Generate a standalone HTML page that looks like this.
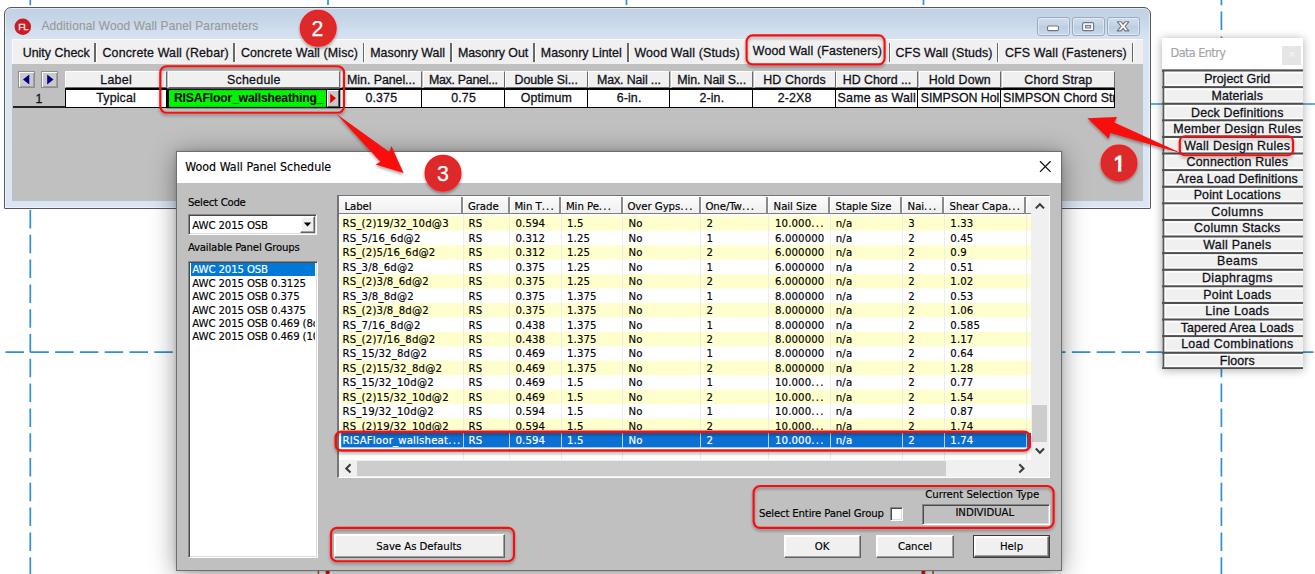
<!DOCTYPE html>
<html><head><meta charset="utf-8">
<title>Wood Wall Panel Schedule</title>
<style>
*{box-sizing:border-box;margin:0;padding:0}
html,body{width:1315px;height:574px;overflow:hidden;background:#fff}
body{position:relative;font-family:"Liberation Sans",sans-serif;font-size:12.4px;color:#000}
.a{position:absolute}
.t{position:absolute;white-space:pre;line-height:1}
.ar{font-family:"Liberation Sans",sans-serif;-webkit-text-stroke:0.28px}
.th{font-family:"DejaVu Sans Condensed","DejaVu Sans","Liberation Sans",sans-serif;-webkit-text-stroke:0.15px}
#mw{position:absolute;left:4px;top:7px;width:1147px;height:202px;border:1px solid #585858;border-radius:7px 7px 1px 1px;
 background:linear-gradient(#c2d2e4 0,#c5d5e7 10px,#d1dfee 24px,#d9e5f2 34px,#dae6f3 100%);box-shadow:inset 0 0 0 1px rgba(255,255,255,.5)}
#client{position:absolute;left:12px;top:39px;width:1131px;height:162px;background:#c0c0c0}
#tabs{position:absolute;left:0;top:0;width:1131px;height:25px;background:#f0f0f0;border-left:1px solid #fbfbfb;border-top:1px solid #fbfbfb}
.sep{position:absolute;top:42.5px;width:1.5px;height:19.5px;background:#686868;box-shadow:1px 0 0 #fff}
.hd{position:absolute;top:71px;height:17px;background:#f0f0f0;border:1px solid;border-color:#fff #6a6a6a #6a6a6a #fff}
.cell{position:absolute;top:88px;height:20px;background:#fff;border-top:2px solid #000;border-bottom:1px solid #000;border-right:1px solid #000}
.nav{position:absolute;top:71px;width:17px;height:17px;background:#cacaca;border:1px solid #8e8e8e;box-shadow:inset 1px 1px 0 #fff,inset -1px -1px 0 #a0a0a0}
.wb{position:absolute;top:17px;width:33px;height:19px;border:1px solid #9aaac0;border-radius:3px;background:linear-gradient(#cfdcec,#c3d3e6 45%,#bccde2 50%,#c9d8ea);box-shadow:inset 0 0 0 1px rgba(255,255,255,.45)}
/* data entry */
#de{position:absolute;left:1162px;top:38px;width:141px;height:331.4px;background:#fff;box-shadow:0 1px 9px rgba(0,0,0,.33);overflow:hidden}
.deb{position:absolute;left:1px;width:148px;background:#f0f0f0;border-top:1px solid #fff;border-left:1px solid #fff;border-bottom:2px solid #555;text-align:center}
/* dialog */
#dlg{position:absolute;left:176px;top:151px;width:886px;height:420px;background:#c0c0c0;border:1px solid #6e6e6e;box-shadow:0 3px 24px rgba(0,0,0,.42),0 0 4px rgba(0,0,0,.15)}
#dlgt{position:absolute;left:0;top:0;width:884px;height:31px;background:#fff}
.sunk{border:1px solid;border-color:#868686 #fff #fff #868686;box-shadow:inset 1px 1px 0 #4a4a4a, inset -1px -1px 0 #dcdcdc}
.btn{position:absolute;background:#f0f0f0;border:1px solid;border-color:#fff #636363 #636363 #fff;box-shadow:inset -1px -1px 0 #a0a0a0,inset 1px 1px 0 #fff}
</style></head>
<body>
<svg class="a" style="left:0;top:0" width="1315" height="574">
 <g stroke="#2f90d2" stroke-width="1.7" fill="none">
  <line x1="30.3" y1="-13.2" x2="30.3" y2="574" stroke-dasharray="18.5 6.3"/>
  <line x1="328" y1="0" x2="328" y2="5"/><line x1="626.5" y1="0" x2="626.5" y2="5"/><line x1="923.5" y1="0" x2="923.5" y2="5"/>
  <line x1="1221.4" y1="-13.2" x2="1221.4" y2="574" stroke-dasharray="18.5 6.3"/>
  <line x1="1151" y1="104" x2="1315" y2="104" stroke-width="1.5" stroke="#3391d4"/>
  <line x1="-19.3" y1="352.1" x2="1315" y2="352.1" stroke-dasharray="18.5 6.3"/>
 </g>
 <rect x="317.6" y="570" width="1.6" height="4" fill="#b5651d"/><rect x="325.7" y="570" width="3.8" height="4" fill="#e01010"/>
 <rect x="921.5" y="570" width="3.8" height="4" fill="#e01010"/><rect x="932.3" y="570" width="1.6" height="4" fill="#b5651d"/>
</svg>
<div id="mw"></div>
<svg class="a" style="left:13px;top:17px" width="20" height="20" viewBox="0 0 20 20"><circle cx="9.8" cy="9.75" r="8.25" fill="#c81c22"/>
<text x="9.9" y="13.1" style="font-family:'Liberation Sans',sans-serif;font-size:9.5px" fill="#f8e4e4" stroke="#f8e4e4" stroke-width="0.3" text-anchor="middle" letter-spacing="-0.9">FL</text></svg>
<div class="t ar" style="left:41.40px;top:21.00px;font-size:11.9px;color:#999;letter-spacing:0.167px;-webkit-text-stroke:0.15px;">Additional Wood Wall Panel Parameters</div>
<div class="wb" style="left:1037px"></div>
<div class="wb" style="left:1072px"></div>
<div class="wb" style="left:1107px"></div>
<svg class="a" style="left:1037px;top:17px" width="104" height="19">
 <rect x="10.5" y="9" width="11" height="4.6" rx="1.3" fill="#fff" stroke="#6f7480" stroke-width="1.1"/>
 <rect x="45.6" y="5.6" width="11" height="8" rx="1.3" fill="#fff" stroke="#6f7480" stroke-width="1.1"/>
 <rect x="48.6" y="8.4" width="5" height="2.6" fill="#c3d3e6" stroke="#6f7480" stroke-width="1"/>
 <path d="M80.4 4.8 L84.2 4.8 L86.1 7.3 L88 4.8 L91.8 4.8 L88.1 9.3 L91.9 13.9 L88 13.9 L86.1 11.3 L84.2 13.9 L80.3 13.9 L84.1 9.3 Z" fill="#fff" stroke="#6f7480" stroke-width="1.1" stroke-linejoin="round"/>
</svg>
<div id="client"><div id="tabs"></div></div>
<div class="t ar" style="left:22.70px;top:47.00px;font-size:12.4px;color:#101018;letter-spacing:0.026px;">Unity Check</div>
<div class="t ar" style="left:102.50px;top:47.00px;font-size:12.4px;color:#101018;letter-spacing:0.166px;">Concrete Wall (Rebar)</div>
<div class="t ar" style="left:240.90px;top:47.00px;font-size:12.4px;color:#101018;letter-spacing:0.132px;">Concrete Wall (Misc)</div>
<div class="t ar" style="left:370.30px;top:47.00px;font-size:12.4px;color:#101018;letter-spacing:0.005px;">Masonry Wall</div>
<div class="t ar" style="left:458.00px;top:47.00px;font-size:12.4px;color:#101018;letter-spacing:-0.078px;">Masonry Out</div>
<div class="t ar" style="left:540.80px;top:47.00px;font-size:12.4px;color:#101018;letter-spacing:0.028px;">Masonry Lintel</div>
<div class="t ar" style="left:634.40px;top:47.00px;font-size:12.4px;color:#101018;letter-spacing:0.170px;">Wood Wall (Studs)</div>
<div class="t ar" style="left:752.80px;top:45.00px;font-size:12.4px;color:#101018;letter-spacing:0.155px;">Wood Wall (Fasteners)</div>
<div class="t ar" style="left:895.40px;top:47.00px;font-size:12.4px;color:#101018;letter-spacing:0.120px;">CFS Wall (Studs)</div>
<div class="t ar" style="left:1005.00px;top:47.00px;font-size:12.4px;color:#101018;letter-spacing:0.161px;">CFS Wall (Fasteners)</div>
<div class="sep" style="left:94.2px"></div>
<div class="sep" style="left:233.2px"></div>
<div class="sep" style="left:362.6px"></div>
<div class="sep" style="left:450.3px"></div>
<div class="sep" style="left:533px"></div>
<div class="sep" style="left:627.2px"></div>
<div class="sep" style="left:888.8px"></div>
<div class="sep" style="left:996.8px"></div>
<div class="sep" style="left:1131.5px"></div>
<div class="a" style="left:746px;top:36.5px;width:139px;height:27.5px;background:#f0f0f0;border-left:1px solid #fbfbfb;border-top:1px solid #fbfbfb"></div>
<div class="t ar" style="left:752.80px;top:45.00px;font-size:12.4px;color:#101018;letter-spacing:0.155px;">Wood Wall (Fasteners)</div>
<div class="nav" style="left:18px"></div><div class="nav" style="left:41px"></div>
<svg class="a" style="left:18px;top:71px" width="42" height="18"><path d="M11.3 3.6V13.4L5 8.5Z" fill="#00008b"/><path d="M29.2 3.6V13.4L35.5 8.5Z" fill="#00008b"/></svg>
<div class="a" style="left:13px;top:89px;width:52px;height:19px;background:#c0c0c0;border-bottom:2px solid #222"></div>
<div class="t ar" style="left:35.55px;top:93.00px;font-size:12.4px;color:#101018;">1</div>
<div class="hd" style="left:65px;width:102px"></div>
<div class="t ar" style="left:100.30px;top:74.00px;font-size:12.4px;color:#101018;letter-spacing:0.265px;">Label</div>
<div class="cell" style="left:64.5px;width:102.5px;border-left:1px solid #000"></div>
<div class="t ar" style="left:96.25px;top:92.00px;font-size:12.4px;color:#101018;letter-spacing:0.150px;">Typical</div>
<div class="hd" style="left:167.5px;width:172.5px"></div>
<div class="t ar" style="left:227.00px;top:74.00px;font-size:12.4px;color:#101018;letter-spacing:0.256px;">Schedule</div>
<div class="hd" style="left:340.5px;width:81.5px"></div>
<div class="t ar" style="left:347.10px;top:74.00px;font-size:12.4px;color:#101018;letter-spacing:-0.052px;">Min. Panel...</div>
<div class="cell" style="left:340.0px;width:82.0px;"></div>
<div class="t ar" style="left:365.43px;top:92.00px;font-size:12.4px;color:#101018;letter-spacing:0.150px;">0.375</div>
<div class="hd" style="left:422.5px;width:82.0px"></div>
<div class="t ar" style="left:428.90px;top:74.00px;font-size:12.4px;color:#101018;letter-spacing:-0.264px;">Max. Panel...</div>
<div class="cell" style="left:422.0px;width:82.5px;"></div>
<div class="t ar" style="left:451.21px;top:92.00px;font-size:12.4px;color:#101018;letter-spacing:0.150px;">0.75</div>
<div class="hd" style="left:505px;width:82.5px"></div>
<div class="t ar" style="left:514.50px;top:74.00px;font-size:12.4px;color:#101018;letter-spacing:-0.055px;">Double Si...</div>
<div class="cell" style="left:504.5px;width:83.0px;"></div>
<div class="t ar" style="left:520.65px;top:92.00px;font-size:12.4px;color:#101018;letter-spacing:0.150px;">Optimum</div>
<div class="hd" style="left:588px;width:82px"></div>
<div class="t ar" style="left:597.00px;top:74.00px;font-size:12.4px;color:#101018;letter-spacing:-0.121px;">Max. Nail ...</div>
<div class="cell" style="left:587.5px;width:82.5px;"></div>
<div class="t ar" style="left:616.64px;top:92.00px;font-size:12.4px;color:#101018;letter-spacing:0.150px;">6-in.</div>
<div class="hd" style="left:670.5px;width:82.5px"></div>
<div class="t ar" style="left:677.35px;top:74.00px;font-size:12.4px;color:#101018;letter-spacing:-0.114px;">Min. Nail S...</div>
<div class="cell" style="left:670.0px;width:83.0px;"></div>
<div class="t ar" style="left:699.39px;top:92.00px;font-size:12.4px;color:#101018;letter-spacing:0.150px;">2-in.</div>
<div class="hd" style="left:753.5px;width:82.0px"></div>
<div class="t ar" style="left:763.15px;top:74.00px;font-size:12.4px;color:#101018;letter-spacing:0.171px;">HD Chords</div>
<div class="cell" style="left:753.0px;width:82.5px;"></div>
<div class="t ar" style="left:777.66px;top:92.00px;font-size:12.4px;color:#101018;letter-spacing:0.150px;">2-2X8</div>
<div class="hd" style="left:836px;width:82px"></div>
<div class="t ar" style="left:842.85px;top:74.00px;font-size:12.4px;color:#101018;letter-spacing:-0.055px;">HD Chord ...</div>
<div class="cell" style="left:835.5px;width:82.5px;"></div>
<div class="a" style="left:837px;top:90px;width:80px;height:17px;overflow:hidden">
<div class="t ar" style="left:0.60px;top:2.00px;font-size:12.4px;color:#101018;letter-spacing:0.200px;">Same as Wall</div>
</div>
<div class="hd" style="left:918.5px;width:82.5px"></div>
<div class="t ar" style="left:928.75px;top:74.00px;font-size:12.4px;color:#101018;letter-spacing:0.169px;">Hold Down</div>
<div class="cell" style="left:918.0px;width:83.0px;"></div>
<div class="a" style="left:919.5px;top:90px;width:80.5px;height:17px;overflow:hidden">
<div class="t ar" style="left:1.20px;top:2.00px;font-size:12.4px;color:#101018;letter-spacing:-0.050px;">SIMPSON Hol</div>
</div>
<div class="hd" style="left:1001.5px;width:113.5px"></div>
<div class="t ar" style="left:1024.35px;top:74.00px;font-size:12.4px;color:#101018;letter-spacing:0.094px;">Chord Strap</div>
<div class="cell" style="left:1001.0px;width:114.0px;"></div>
<div class="a" style="left:1002.5px;top:90px;width:111.5px;height:17px;overflow:hidden">
<div class="t ar" style="left:0.40px;top:2.00px;font-size:12.4px;color:#101018;">SIMPSON Chord Str</div>
</div>
<svg class="a" style="left:165px;top:88px" width="177" height="21"><rect x="1.7" y="0.4" width="173.6" height="19.9" fill="#0a0a0a"/><rect x="4" y="2.1" width="157" height="16.8" fill="#00f600"/></svg>
<div class="a" style="left:327px;top:90px;width:11.5px;height:17px;background:#c8c8c8;border:1px solid;border-color:#fff #555 #555 #fff"></div>
<svg class="a" style="left:327px;top:90px" width="12" height="17"><path d="M3.2 3.4V13.2L9 8.3Z" fill="#e00000"/></svg>
<div class="t ar" style="left:174.00px;top:92.00px;font-size:12.2px;color:#000;letter-spacing:-0.178px;font-weight:bold;-webkit-text-stroke:0;">RISAFloor_wallsheathing_</div>
<div id="de">
<div class="a" style="left:120px;top:8px;width:19px;height:19px;background:#e5e5e5"></div>
<svg class="a" style="left:0;top:-1px" width="141" height="333"><rect x="0" y="32.2" width="141" height="299.8" fill="#f0f0f0"/><rect x="2.2" y="35" width="1.9" height="296" fill="#fdfdfd"/><rect x="0" y="32.50" width="141" height="2.2" fill="#4e4e4e"/><rect x="2" y="34.70" width="139" height="1.8" fill="#fdfdfd"/><rect x="2" y="47.40" width="139" height="1.7" fill="#fdfdfd"/><rect x="0" y="49.10" width="141" height="2.2" fill="#4e4e4e"/><rect x="2" y="51.30" width="139" height="1.8" fill="#fdfdfd"/><rect x="2" y="64.00" width="139" height="1.7" fill="#fdfdfd"/><rect x="0" y="65.70" width="141" height="2.2" fill="#4e4e4e"/><rect x="2" y="67.90" width="139" height="1.8" fill="#fdfdfd"/><rect x="2" y="80.60" width="139" height="1.7" fill="#fdfdfd"/><rect x="0" y="82.30" width="141" height="2.2" fill="#4e4e4e"/><rect x="2" y="84.50" width="139" height="1.8" fill="#fdfdfd"/><rect x="2" y="97.20" width="139" height="1.7" fill="#fdfdfd"/><rect x="0" y="98.90" width="141" height="2.2" fill="#4e4e4e"/><rect x="2" y="101.10" width="139" height="1.8" fill="#fdfdfd"/><rect x="2" y="113.80" width="139" height="1.7" fill="#fdfdfd"/><rect x="0" y="115.50" width="141" height="2.2" fill="#4e4e4e"/><rect x="2" y="117.70" width="139" height="1.8" fill="#fdfdfd"/><rect x="2" y="130.40" width="139" height="1.7" fill="#fdfdfd"/><rect x="0" y="132.10" width="141" height="2.2" fill="#4e4e4e"/><rect x="2" y="134.30" width="139" height="1.8" fill="#fdfdfd"/><rect x="2" y="147.00" width="139" height="1.7" fill="#fdfdfd"/><rect x="0" y="148.70" width="141" height="2.2" fill="#4e4e4e"/><rect x="2" y="150.90" width="139" height="1.8" fill="#fdfdfd"/><rect x="2" y="163.60" width="139" height="1.7" fill="#fdfdfd"/><rect x="0" y="165.30" width="141" height="2.2" fill="#4e4e4e"/><rect x="2" y="167.50" width="139" height="1.8" fill="#fdfdfd"/><rect x="2" y="180.20" width="139" height="1.7" fill="#fdfdfd"/><rect x="0" y="181.90" width="141" height="2.2" fill="#4e4e4e"/><rect x="2" y="184.10" width="139" height="1.8" fill="#fdfdfd"/><rect x="2" y="196.80" width="139" height="1.7" fill="#fdfdfd"/><rect x="0" y="198.50" width="141" height="2.2" fill="#4e4e4e"/><rect x="2" y="200.70" width="139" height="1.8" fill="#fdfdfd"/><rect x="2" y="213.40" width="139" height="1.7" fill="#fdfdfd"/><rect x="0" y="215.10" width="141" height="2.2" fill="#4e4e4e"/><rect x="2" y="217.30" width="139" height="1.8" fill="#fdfdfd"/><rect x="2" y="230.00" width="139" height="1.7" fill="#fdfdfd"/><rect x="0" y="231.70" width="141" height="2.2" fill="#4e4e4e"/><rect x="2" y="233.90" width="139" height="1.8" fill="#fdfdfd"/><rect x="2" y="246.60" width="139" height="1.7" fill="#fdfdfd"/><rect x="0" y="248.30" width="141" height="2.2" fill="#4e4e4e"/><rect x="2" y="250.50" width="139" height="1.8" fill="#fdfdfd"/><rect x="2" y="263.20" width="139" height="1.7" fill="#fdfdfd"/><rect x="0" y="264.90" width="141" height="2.2" fill="#4e4e4e"/><rect x="2" y="267.10" width="139" height="1.8" fill="#fdfdfd"/><rect x="2" y="279.80" width="139" height="1.7" fill="#fdfdfd"/><rect x="0" y="281.50" width="141" height="2.2" fill="#4e4e4e"/><rect x="2" y="283.70" width="139" height="1.8" fill="#fdfdfd"/><rect x="2" y="296.40" width="139" height="1.7" fill="#fdfdfd"/><rect x="0" y="298.10" width="141" height="2.2" fill="#4e4e4e"/><rect x="2" y="300.30" width="139" height="1.8" fill="#fdfdfd"/><rect x="2" y="313.00" width="139" height="1.7" fill="#fdfdfd"/><rect x="0" y="314.70" width="141" height="2.2" fill="#4e4e4e"/><rect x="2" y="316.90" width="139" height="1.8" fill="#fdfdfd"/><rect x="2" y="328.50" width="139" height="1.7" fill="#fdfdfd"/><rect x="0" y="330.20" width="141" height="2.2" fill="#4e4e4e"/><rect x="0.5" y="33" width="1.8" height="299" fill="#585858"/><rect x="0" y="32.2" width="141" height="0.8" fill="#8a8a8a"/></svg>
</div>
<div class="t th" style="left:1170.50px;top:47.00px;font-size:12.6px;color:#a4a4a4;letter-spacing:-0.591px;">Data Entry</div>
<div class="t ar" style="left:1288.49px;top:49.00px;font-size:11px;color:#f4f4f4;">×</div>
<div class="t ar" style="left:1204.15px;top:73.00px;font-size:12.4px;color:#101018;letter-spacing:0.058px;">Project Grid</div>
<div class="t ar" style="left:1211.50px;top:90.00px;font-size:12.4px;color:#101018;letter-spacing:0.137px;">Materials</div>
<div class="t ar" style="left:1191.00px;top:107.00px;font-size:12.4px;color:#101018;letter-spacing:0.187px;">Deck Definitions</div>
<div class="t ar" style="left:1173.30px;top:123.00px;font-size:12.4px;color:#101018;letter-spacing:0.285px;">Member Design Rules</div>
<div class="t ar" style="left:1184.30px;top:140.00px;font-size:12.4px;color:#101018;letter-spacing:0.310px;">Wall Design Rules</div>
<div class="t ar" style="left:1186.50px;top:156.00px;font-size:12.4px;color:#101018;letter-spacing:0.235px;">Connection Rules</div>
<div class="t ar" style="left:1176.60px;top:173.00px;font-size:12.4px;color:#101018;letter-spacing:0.132px;">Area Load Definitions</div>
<div class="t ar" style="left:1193.70px;top:189.00px;font-size:12.4px;color:#101018;letter-spacing:0.158px;">Point Locations</div>
<div class="t ar" style="left:1211.20px;top:206.00px;font-size:12.4px;color:#101018;letter-spacing:0.512px;">Columns</div>
<div class="t ar" style="left:1194.10px;top:222.00px;font-size:12.4px;color:#101018;letter-spacing:0.235px;">Column Stacks</div>
<div class="t ar" style="left:1203.25px;top:239.00px;font-size:12.4px;color:#101018;letter-spacing:0.289px;">Wall Panels</div>
<div class="t ar" style="left:1216.95px;top:255.00px;font-size:12.4px;color:#101018;letter-spacing:0.477px;">Beams</div>
<div class="t ar" style="left:1201.90px;top:272.00px;font-size:12.4px;color:#101018;letter-spacing:0.417px;">Diaphragms</div>
<div class="t ar" style="left:1203.25px;top:289.00px;font-size:12.4px;color:#101018;letter-spacing:0.241px;">Point Loads</div>
<div class="t ar" style="left:1205.30px;top:305.00px;font-size:12.4px;color:#101018;letter-spacing:0.347px;">Line Loads</div>
<div class="t ar" style="left:1180.65px;top:322.00px;font-size:12.4px;color:#101018;letter-spacing:0.124px;">Tapered Area Loads</div>
<div class="t ar" style="left:1181.15px;top:338.00px;font-size:12.4px;color:#101018;letter-spacing:0.328px;">Load Combinations</div>
<div class="t ar" style="left:1219.80px;top:355.00px;font-size:12.4px;color:#101018;letter-spacing:0.070px;">Floors</div>
<div id="dlg"><div id="dlgt"></div></div>
<div class="t th" style="left:185.20px;top:161.00px;font-size:12.3px;color:#000;letter-spacing:0.040px;">Wood Wall Panel Schedule</div>
<svg class="a" style="left:1038px;top:159px" width="15" height="15"><path d="M2 2.3L12.6 12.9M12.6 2.3L2 12.9" stroke="#111" stroke-width="1.25" fill="none"/></svg>
<div class="t th" style="left:187.90px;top:197.00px;font-size:11.3px;color:#000;letter-spacing:-0.263px;">Select Code</div>
<div class="a sunk" style="left:188px;top:213.5px;width:129px;height:21px;background:#fff"></div>
<div class="btn" style="left:299.5px;top:215.5px;width:15.5px;height:17px"></div>
<svg class="a" style="left:299.5px;top:215.5px" width="16" height="17"><path d="M3.8 6.6H11.2L7.5 10.6Z" fill="#000"/></svg>
<div class="t th" style="left:192.30px;top:220.00px;font-size:11.3px;color:#000;letter-spacing:-0.131px;">AWC 2015 OSB</div>
<div class="t th" style="left:187.90px;top:242.00px;font-size:11.3px;color:#000;letter-spacing:-0.191px;">Available Panel Groups</div>
<div class="a sunk" style="left:188px;top:260.5px;width:129.5px;height:297.5px;background:#fff"></div>
<div class="a" style="left:190.5px;top:262.7px;width:124.5px;height:13.4px;background:#0078d7"></div>
<div class="a" style="left:190px;top:262px;width:125px;height:90px;overflow:hidden">
<div class="t th" style="left:2.30px;top:2.00px;font-size:11.3px;color:#fff;letter-spacing:-0.130px;">AWC 2015 OSB</div>
<div class="t th" style="left:2.30px;top:16.00px;font-size:11.3px;color:#000;letter-spacing:-0.130px;">AWC 2015 OSB 0.3125</div>
<div class="t th" style="left:2.30px;top:29.00px;font-size:11.3px;color:#000;letter-spacing:-0.130px;">AWC 2015 OSB 0.375</div>
<div class="t th" style="left:2.30px;top:43.00px;font-size:11.3px;color:#000;letter-spacing:-0.130px;">AWC 2015 OSB 0.4375</div>
<div class="t th" style="left:2.30px;top:56.00px;font-size:11.3px;color:#000;letter-spacing:-0.130px;">AWC 2015 OSB 0.469 (8d</div>
<div class="t th" style="left:2.30px;top:69.00px;font-size:11.3px;color:#000;letter-spacing:-0.130px;">AWC 2015 OSB 0.469 (10</div>
</div>
<div class="a" style="left:337px;top:195px;width:713px;height:282.5px;background:#fff;border:1px solid;border-color:#757575 #fff #fff #757575;border-left-width:2px"></div>
<svg class="a" style="left:339px;top:213px" width="693" height="248"><rect x="2" y="3.20" width="690" height="14.45" fill="#ffffcd"/><rect x="2" y="32.10" width="690" height="14.45" fill="#ffffcd"/><rect x="2" y="61.00" width="690" height="14.45" fill="#ffffcd"/><rect x="2" y="89.90" width="690" height="14.45" fill="#ffffcd"/><rect x="2" y="118.80" width="690" height="14.45" fill="#ffffcd"/><rect x="2" y="147.70" width="690" height="14.45" fill="#ffffcd"/><rect x="2" y="176.60" width="690" height="14.45" fill="#ffffcd"/><rect x="2" y="205.50" width="690" height="14.45" fill="#ffffcd"/><rect x="2.2" y="219.95" width="689.8" height="14.45" fill="#0a70d4"/></svg>
<div class="a" style="left:462.5px;top:213.5px;width:1px;height:246.5px;background:rgba(232,232,232,.8)"></div>
<div class="a" style="left:509.0px;top:213.5px;width:1px;height:246.5px;background:rgba(232,232,232,.8)"></div>
<div class="a" style="left:560.5px;top:213.5px;width:1px;height:246.5px;background:rgba(232,232,232,.8)"></div>
<div class="a" style="left:622.0px;top:213.5px;width:1px;height:246.5px;background:rgba(232,232,232,.8)"></div>
<div class="a" style="left:700.0px;top:213.5px;width:1px;height:246.5px;background:rgba(232,232,232,.8)"></div>
<div class="a" style="left:767.5px;top:213.5px;width:1px;height:246.5px;background:rgba(232,232,232,.8)"></div>
<div class="a" style="left:829.5px;top:213.5px;width:1px;height:246.5px;background:rgba(232,232,232,.8)"></div>
<div class="a" style="left:901.5px;top:213.5px;width:1px;height:246.5px;background:rgba(232,232,232,.8)"></div>
<div class="a" style="left:943.5px;top:213.5px;width:1px;height:246.5px;background:rgba(232,232,232,.8)"></div>
<div class="a" style="left:1025.8px;top:213.5px;width:1px;height:246.5px;background:rgba(232,232,232,.8)"></div>
<div class="a" style="left:339px;top:196.5px;width:692px;height:17px;background:linear-gradient(#fbfbfb,#efefef);border-bottom:1px solid #7e7e7e"></div>
<div class="a" style="left:461px;top:197px;width:2px;height:15.5px;background:#8a8a8a;box-shadow:1px 0 0 #fff"></div>
<div class="t th" style="left:344.40px;top:201.00px;font-size:11.3px;color:#000;letter-spacing:-0.050px;">Label</div>
<div class="a" style="left:507.5px;top:197px;width:2px;height:15.5px;background:#8a8a8a;box-shadow:1px 0 0 #fff"></div>
<div class="t th" style="left:467.90px;top:201.00px;font-size:11.3px;color:#000;letter-spacing:-0.050px;">Grade</div>
<div class="a" style="left:559px;top:197px;width:2px;height:15.5px;background:#8a8a8a;box-shadow:1px 0 0 #fff"></div>
<div class="t th" style="left:514.40px;top:201.00px;font-size:11.3px;color:#000;letter-spacing:-0.050px;">Min T<span style="letter-spacing:1.25px">...</span></div>
<div class="a" style="left:620.5px;top:197px;width:2px;height:15.5px;background:#8a8a8a;box-shadow:1px 0 0 #fff"></div>
<div class="t th" style="left:565.90px;top:201.00px;font-size:11.3px;color:#000;letter-spacing:-0.050px;">Min Pe<span style="letter-spacing:1.25px">...</span></div>
<div class="a" style="left:698.5px;top:197px;width:2px;height:15.5px;background:#8a8a8a;box-shadow:1px 0 0 #fff"></div>
<div class="t th" style="left:627.40px;top:201.00px;font-size:11.3px;color:#000;letter-spacing:-0.050px;">Over Gyps<span style="letter-spacing:1.25px">...</span></div>
<div class="a" style="left:766px;top:197px;width:2px;height:15.5px;background:#8a8a8a;box-shadow:1px 0 0 #fff"></div>
<div class="t th" style="left:705.40px;top:201.00px;font-size:11.3px;color:#000;letter-spacing:-0.050px;">One/Tw<span style="letter-spacing:1.25px">...</span></div>
<div class="a" style="left:828px;top:197px;width:2px;height:15.5px;background:#8a8a8a;box-shadow:1px 0 0 #fff"></div>
<div class="t th" style="left:773.60px;top:201.00px;font-size:11.3px;color:#000;letter-spacing:-0.050px;">Nail Size</div>
<div class="a" style="left:900px;top:197px;width:2px;height:15.5px;background:#8a8a8a;box-shadow:1px 0 0 #fff"></div>
<div class="t th" style="left:835.60px;top:201.00px;font-size:11.3px;color:#000;letter-spacing:-0.050px;">Staple Size</div>
<div class="a" style="left:942px;top:197px;width:2px;height:15.5px;background:#8a8a8a;box-shadow:1px 0 0 #fff"></div>
<div class="t th" style="left:907.60px;top:201.00px;font-size:11.3px;color:#000;letter-spacing:-0.050px;">Nai<span style="letter-spacing:1.25px">...</span></div>
<div class="a" style="left:1024.3px;top:197px;width:2px;height:15.5px;background:#8a8a8a;box-shadow:1px 0 0 #fff"></div>
<div class="t th" style="left:949.60px;top:201.00px;font-size:11.3px;color:#000;letter-spacing:-0.050px;">Shear Capa<span style="letter-spacing:1.25px">...</span></div>
<div class="t th" style="left:342.50px;top:218.00px;font-size:11.3px;color:#000;letter-spacing:0.170px;">RS_(2)19/32_10d@3</div>
<div class="t th" style="left:468.50px;top:218.00px;font-size:11.3px;color:#000;letter-spacing:0.120px;">RS</div>
<div class="t th" style="left:515.50px;top:218.00px;font-size:11.3px;color:#000;letter-spacing:0.120px;">0.594</div>
<div class="t th" style="left:567.00px;top:218.00px;font-size:11.3px;color:#000;letter-spacing:0.120px;">1.5</div>
<div class="t th" style="left:628.50px;top:218.00px;font-size:11.3px;color:#000;letter-spacing:0.120px;">No</div>
<div class="t th" style="left:706.50px;top:218.00px;font-size:11.3px;color:#000;letter-spacing:0.120px;">2</div>
<div class="t th" style="left:775.00px;top:218.00px;font-size:11.3px;color:#000;letter-spacing:0.120px;">10.000<span style="letter-spacing:1.25px">...</span></div>
<div class="t th" style="left:835.80px;top:218.00px;font-size:11.3px;color:#000;letter-spacing:0.120px;">n/a</div>
<div class="t th" style="left:908.20px;top:218.00px;font-size:11.3px;color:#000;letter-spacing:0.120px;">3</div>
<div class="t th" style="left:950.30px;top:218.00px;font-size:11.3px;color:#000;letter-spacing:0.120px;">1.33</div>
<div class="t th" style="left:342.50px;top:233.00px;font-size:11.3px;color:#000;letter-spacing:0.170px;">RS_5/16_6d@2</div>
<div class="t th" style="left:468.50px;top:233.00px;font-size:11.3px;color:#000;letter-spacing:0.120px;">RS</div>
<div class="t th" style="left:515.50px;top:233.00px;font-size:11.3px;color:#000;letter-spacing:0.120px;">0.312</div>
<div class="t th" style="left:567.00px;top:233.00px;font-size:11.3px;color:#000;letter-spacing:0.120px;">1.25</div>
<div class="t th" style="left:628.50px;top:233.00px;font-size:11.3px;color:#000;letter-spacing:0.120px;">No</div>
<div class="t th" style="left:706.50px;top:233.00px;font-size:11.3px;color:#000;letter-spacing:0.120px;">1</div>
<div class="t th" style="left:775.00px;top:233.00px;font-size:11.3px;color:#000;letter-spacing:0.120px;">6.000000</div>
<div class="t th" style="left:835.80px;top:233.00px;font-size:11.3px;color:#000;letter-spacing:0.120px;">n/a</div>
<div class="t th" style="left:908.20px;top:233.00px;font-size:11.3px;color:#000;letter-spacing:0.120px;">2</div>
<div class="t th" style="left:950.30px;top:233.00px;font-size:11.3px;color:#000;letter-spacing:0.120px;">0.45</div>
<div class="t th" style="left:342.50px;top:247.00px;font-size:11.3px;color:#000;letter-spacing:0.170px;">RS_(2)5/16_6d@2</div>
<div class="t th" style="left:468.50px;top:247.00px;font-size:11.3px;color:#000;letter-spacing:0.120px;">RS</div>
<div class="t th" style="left:515.50px;top:247.00px;font-size:11.3px;color:#000;letter-spacing:0.120px;">0.312</div>
<div class="t th" style="left:567.00px;top:247.00px;font-size:11.3px;color:#000;letter-spacing:0.120px;">1.25</div>
<div class="t th" style="left:628.50px;top:247.00px;font-size:11.3px;color:#000;letter-spacing:0.120px;">No</div>
<div class="t th" style="left:706.50px;top:247.00px;font-size:11.3px;color:#000;letter-spacing:0.120px;">2</div>
<div class="t th" style="left:775.00px;top:247.00px;font-size:11.3px;color:#000;letter-spacing:0.120px;">6.000000</div>
<div class="t th" style="left:835.80px;top:247.00px;font-size:11.3px;color:#000;letter-spacing:0.120px;">n/a</div>
<div class="t th" style="left:908.20px;top:247.00px;font-size:11.3px;color:#000;letter-spacing:0.120px;">2</div>
<div class="t th" style="left:950.30px;top:247.00px;font-size:11.3px;color:#000;letter-spacing:0.120px;">0.9</div>
<div class="t th" style="left:342.50px;top:262.00px;font-size:11.3px;color:#000;letter-spacing:0.170px;">RS_3/8_6d@2</div>
<div class="t th" style="left:468.50px;top:262.00px;font-size:11.3px;color:#000;letter-spacing:0.120px;">RS</div>
<div class="t th" style="left:515.50px;top:262.00px;font-size:11.3px;color:#000;letter-spacing:0.120px;">0.375</div>
<div class="t th" style="left:567.00px;top:262.00px;font-size:11.3px;color:#000;letter-spacing:0.120px;">1.25</div>
<div class="t th" style="left:628.50px;top:262.00px;font-size:11.3px;color:#000;letter-spacing:0.120px;">No</div>
<div class="t th" style="left:706.50px;top:262.00px;font-size:11.3px;color:#000;letter-spacing:0.120px;">1</div>
<div class="t th" style="left:775.00px;top:262.00px;font-size:11.3px;color:#000;letter-spacing:0.120px;">6.000000</div>
<div class="t th" style="left:835.80px;top:262.00px;font-size:11.3px;color:#000;letter-spacing:0.120px;">n/a</div>
<div class="t th" style="left:908.20px;top:262.00px;font-size:11.3px;color:#000;letter-spacing:0.120px;">2</div>
<div class="t th" style="left:950.30px;top:262.00px;font-size:11.3px;color:#000;letter-spacing:0.120px;">0.51</div>
<div class="t th" style="left:342.50px;top:276.00px;font-size:11.3px;color:#000;letter-spacing:0.170px;">RS_(2)3/8_6d@2</div>
<div class="t th" style="left:468.50px;top:276.00px;font-size:11.3px;color:#000;letter-spacing:0.120px;">RS</div>
<div class="t th" style="left:515.50px;top:276.00px;font-size:11.3px;color:#000;letter-spacing:0.120px;">0.375</div>
<div class="t th" style="left:567.00px;top:276.00px;font-size:11.3px;color:#000;letter-spacing:0.120px;">1.25</div>
<div class="t th" style="left:628.50px;top:276.00px;font-size:11.3px;color:#000;letter-spacing:0.120px;">No</div>
<div class="t th" style="left:706.50px;top:276.00px;font-size:11.3px;color:#000;letter-spacing:0.120px;">2</div>
<div class="t th" style="left:775.00px;top:276.00px;font-size:11.3px;color:#000;letter-spacing:0.120px;">6.000000</div>
<div class="t th" style="left:835.80px;top:276.00px;font-size:11.3px;color:#000;letter-spacing:0.120px;">n/a</div>
<div class="t th" style="left:908.20px;top:276.00px;font-size:11.3px;color:#000;letter-spacing:0.120px;">2</div>
<div class="t th" style="left:950.30px;top:276.00px;font-size:11.3px;color:#000;letter-spacing:0.120px;">1.02</div>
<div class="t th" style="left:342.50px;top:291.00px;font-size:11.3px;color:#000;letter-spacing:0.170px;">RS_3/8_8d@2</div>
<div class="t th" style="left:468.50px;top:291.00px;font-size:11.3px;color:#000;letter-spacing:0.120px;">RS</div>
<div class="t th" style="left:515.50px;top:291.00px;font-size:11.3px;color:#000;letter-spacing:0.120px;">0.375</div>
<div class="t th" style="left:567.00px;top:291.00px;font-size:11.3px;color:#000;letter-spacing:0.120px;">1.375</div>
<div class="t th" style="left:628.50px;top:291.00px;font-size:11.3px;color:#000;letter-spacing:0.120px;">No</div>
<div class="t th" style="left:706.50px;top:291.00px;font-size:11.3px;color:#000;letter-spacing:0.120px;">1</div>
<div class="t th" style="left:775.00px;top:291.00px;font-size:11.3px;color:#000;letter-spacing:0.120px;">8.000000</div>
<div class="t th" style="left:835.80px;top:291.00px;font-size:11.3px;color:#000;letter-spacing:0.120px;">n/a</div>
<div class="t th" style="left:908.20px;top:291.00px;font-size:11.3px;color:#000;letter-spacing:0.120px;">2</div>
<div class="t th" style="left:950.30px;top:291.00px;font-size:11.3px;color:#000;letter-spacing:0.120px;">0.53</div>
<div class="t th" style="left:342.50px;top:305.00px;font-size:11.3px;color:#000;letter-spacing:0.170px;">RS_(2)3/8_8d@2</div>
<div class="t th" style="left:468.50px;top:305.00px;font-size:11.3px;color:#000;letter-spacing:0.120px;">RS</div>
<div class="t th" style="left:515.50px;top:305.00px;font-size:11.3px;color:#000;letter-spacing:0.120px;">0.375</div>
<div class="t th" style="left:567.00px;top:305.00px;font-size:11.3px;color:#000;letter-spacing:0.120px;">1.375</div>
<div class="t th" style="left:628.50px;top:305.00px;font-size:11.3px;color:#000;letter-spacing:0.120px;">No</div>
<div class="t th" style="left:706.50px;top:305.00px;font-size:11.3px;color:#000;letter-spacing:0.120px;">2</div>
<div class="t th" style="left:775.00px;top:305.00px;font-size:11.3px;color:#000;letter-spacing:0.120px;">8.000000</div>
<div class="t th" style="left:835.80px;top:305.00px;font-size:11.3px;color:#000;letter-spacing:0.120px;">n/a</div>
<div class="t th" style="left:908.20px;top:305.00px;font-size:11.3px;color:#000;letter-spacing:0.120px;">2</div>
<div class="t th" style="left:950.30px;top:305.00px;font-size:11.3px;color:#000;letter-spacing:0.120px;">1.06</div>
<div class="t th" style="left:342.50px;top:320.00px;font-size:11.3px;color:#000;letter-spacing:0.170px;">RS_7/16_8d@2</div>
<div class="t th" style="left:468.50px;top:320.00px;font-size:11.3px;color:#000;letter-spacing:0.120px;">RS</div>
<div class="t th" style="left:515.50px;top:320.00px;font-size:11.3px;color:#000;letter-spacing:0.120px;">0.438</div>
<div class="t th" style="left:567.00px;top:320.00px;font-size:11.3px;color:#000;letter-spacing:0.120px;">1.375</div>
<div class="t th" style="left:628.50px;top:320.00px;font-size:11.3px;color:#000;letter-spacing:0.120px;">No</div>
<div class="t th" style="left:706.50px;top:320.00px;font-size:11.3px;color:#000;letter-spacing:0.120px;">1</div>
<div class="t th" style="left:775.00px;top:320.00px;font-size:11.3px;color:#000;letter-spacing:0.120px;">8.000000</div>
<div class="t th" style="left:835.80px;top:320.00px;font-size:11.3px;color:#000;letter-spacing:0.120px;">n/a</div>
<div class="t th" style="left:908.20px;top:320.00px;font-size:11.3px;color:#000;letter-spacing:0.120px;">2</div>
<div class="t th" style="left:950.30px;top:320.00px;font-size:11.3px;color:#000;letter-spacing:0.120px;">0.585</div>
<div class="t th" style="left:342.50px;top:334.00px;font-size:11.3px;color:#000;letter-spacing:0.170px;">RS_(2)7/16_8d@2</div>
<div class="t th" style="left:468.50px;top:334.00px;font-size:11.3px;color:#000;letter-spacing:0.120px;">RS</div>
<div class="t th" style="left:515.50px;top:334.00px;font-size:11.3px;color:#000;letter-spacing:0.120px;">0.438</div>
<div class="t th" style="left:567.00px;top:334.00px;font-size:11.3px;color:#000;letter-spacing:0.120px;">1.375</div>
<div class="t th" style="left:628.50px;top:334.00px;font-size:11.3px;color:#000;letter-spacing:0.120px;">No</div>
<div class="t th" style="left:706.50px;top:334.00px;font-size:11.3px;color:#000;letter-spacing:0.120px;">2</div>
<div class="t th" style="left:775.00px;top:334.00px;font-size:11.3px;color:#000;letter-spacing:0.120px;">8.000000</div>
<div class="t th" style="left:835.80px;top:334.00px;font-size:11.3px;color:#000;letter-spacing:0.120px;">n/a</div>
<div class="t th" style="left:908.20px;top:334.00px;font-size:11.3px;color:#000;letter-spacing:0.120px;">2</div>
<div class="t th" style="left:950.30px;top:334.00px;font-size:11.3px;color:#000;letter-spacing:0.120px;">1.17</div>
<div class="t th" style="left:342.50px;top:348.00px;font-size:11.3px;color:#000;letter-spacing:0.170px;">RS_15/32_8d@2</div>
<div class="t th" style="left:468.50px;top:348.00px;font-size:11.3px;color:#000;letter-spacing:0.120px;">RS</div>
<div class="t th" style="left:515.50px;top:348.00px;font-size:11.3px;color:#000;letter-spacing:0.120px;">0.469</div>
<div class="t th" style="left:567.00px;top:348.00px;font-size:11.3px;color:#000;letter-spacing:0.120px;">1.375</div>
<div class="t th" style="left:628.50px;top:348.00px;font-size:11.3px;color:#000;letter-spacing:0.120px;">No</div>
<div class="t th" style="left:706.50px;top:348.00px;font-size:11.3px;color:#000;letter-spacing:0.120px;">1</div>
<div class="t th" style="left:775.00px;top:348.00px;font-size:11.3px;color:#000;letter-spacing:0.120px;">8.000000</div>
<div class="t th" style="left:835.80px;top:348.00px;font-size:11.3px;color:#000;letter-spacing:0.120px;">n/a</div>
<div class="t th" style="left:908.20px;top:348.00px;font-size:11.3px;color:#000;letter-spacing:0.120px;">2</div>
<div class="t th" style="left:950.30px;top:348.00px;font-size:11.3px;color:#000;letter-spacing:0.120px;">0.64</div>
<div class="t th" style="left:342.50px;top:363.00px;font-size:11.3px;color:#000;letter-spacing:0.170px;">RS_(2)15/32_8d@2</div>
<div class="t th" style="left:468.50px;top:363.00px;font-size:11.3px;color:#000;letter-spacing:0.120px;">RS</div>
<div class="t th" style="left:515.50px;top:363.00px;font-size:11.3px;color:#000;letter-spacing:0.120px;">0.469</div>
<div class="t th" style="left:567.00px;top:363.00px;font-size:11.3px;color:#000;letter-spacing:0.120px;">1.375</div>
<div class="t th" style="left:628.50px;top:363.00px;font-size:11.3px;color:#000;letter-spacing:0.120px;">No</div>
<div class="t th" style="left:706.50px;top:363.00px;font-size:11.3px;color:#000;letter-spacing:0.120px;">2</div>
<div class="t th" style="left:775.00px;top:363.00px;font-size:11.3px;color:#000;letter-spacing:0.120px;">8.000000</div>
<div class="t th" style="left:835.80px;top:363.00px;font-size:11.3px;color:#000;letter-spacing:0.120px;">n/a</div>
<div class="t th" style="left:908.20px;top:363.00px;font-size:11.3px;color:#000;letter-spacing:0.120px;">2</div>
<div class="t th" style="left:950.30px;top:363.00px;font-size:11.3px;color:#000;letter-spacing:0.120px;">1.28</div>
<div class="t th" style="left:342.50px;top:377.00px;font-size:11.3px;color:#000;letter-spacing:0.170px;">RS_15/32_10d@2</div>
<div class="t th" style="left:468.50px;top:377.00px;font-size:11.3px;color:#000;letter-spacing:0.120px;">RS</div>
<div class="t th" style="left:515.50px;top:377.00px;font-size:11.3px;color:#000;letter-spacing:0.120px;">0.469</div>
<div class="t th" style="left:567.00px;top:377.00px;font-size:11.3px;color:#000;letter-spacing:0.120px;">1.5</div>
<div class="t th" style="left:628.50px;top:377.00px;font-size:11.3px;color:#000;letter-spacing:0.120px;">No</div>
<div class="t th" style="left:706.50px;top:377.00px;font-size:11.3px;color:#000;letter-spacing:0.120px;">1</div>
<div class="t th" style="left:775.00px;top:377.00px;font-size:11.3px;color:#000;letter-spacing:0.120px;">10.000<span style="letter-spacing:1.25px">...</span></div>
<div class="t th" style="left:835.80px;top:377.00px;font-size:11.3px;color:#000;letter-spacing:0.120px;">n/a</div>
<div class="t th" style="left:908.20px;top:377.00px;font-size:11.3px;color:#000;letter-spacing:0.120px;">2</div>
<div class="t th" style="left:950.30px;top:377.00px;font-size:11.3px;color:#000;letter-spacing:0.120px;">0.77</div>
<div class="t th" style="left:342.50px;top:392.00px;font-size:11.3px;color:#000;letter-spacing:0.170px;">RS_(2)15/32_10d@2</div>
<div class="t th" style="left:468.50px;top:392.00px;font-size:11.3px;color:#000;letter-spacing:0.120px;">RS</div>
<div class="t th" style="left:515.50px;top:392.00px;font-size:11.3px;color:#000;letter-spacing:0.120px;">0.469</div>
<div class="t th" style="left:567.00px;top:392.00px;font-size:11.3px;color:#000;letter-spacing:0.120px;">1.5</div>
<div class="t th" style="left:628.50px;top:392.00px;font-size:11.3px;color:#000;letter-spacing:0.120px;">No</div>
<div class="t th" style="left:706.50px;top:392.00px;font-size:11.3px;color:#000;letter-spacing:0.120px;">2</div>
<div class="t th" style="left:775.00px;top:392.00px;font-size:11.3px;color:#000;letter-spacing:0.120px;">10.000<span style="letter-spacing:1.25px">...</span></div>
<div class="t th" style="left:835.80px;top:392.00px;font-size:11.3px;color:#000;letter-spacing:0.120px;">n/a</div>
<div class="t th" style="left:908.20px;top:392.00px;font-size:11.3px;color:#000;letter-spacing:0.120px;">2</div>
<div class="t th" style="left:950.30px;top:392.00px;font-size:11.3px;color:#000;letter-spacing:0.120px;">1.54</div>
<div class="t th" style="left:342.50px;top:406.00px;font-size:11.3px;color:#000;letter-spacing:0.170px;">RS_19/32_10d@2</div>
<div class="t th" style="left:468.50px;top:406.00px;font-size:11.3px;color:#000;letter-spacing:0.120px;">RS</div>
<div class="t th" style="left:515.50px;top:406.00px;font-size:11.3px;color:#000;letter-spacing:0.120px;">0.594</div>
<div class="t th" style="left:567.00px;top:406.00px;font-size:11.3px;color:#000;letter-spacing:0.120px;">1.5</div>
<div class="t th" style="left:628.50px;top:406.00px;font-size:11.3px;color:#000;letter-spacing:0.120px;">No</div>
<div class="t th" style="left:706.50px;top:406.00px;font-size:11.3px;color:#000;letter-spacing:0.120px;">1</div>
<div class="t th" style="left:775.00px;top:406.00px;font-size:11.3px;color:#000;letter-spacing:0.120px;">10.000<span style="letter-spacing:1.25px">...</span></div>
<div class="t th" style="left:835.80px;top:406.00px;font-size:11.3px;color:#000;letter-spacing:0.120px;">n/a</div>
<div class="t th" style="left:908.20px;top:406.00px;font-size:11.3px;color:#000;letter-spacing:0.120px;">2</div>
<div class="t th" style="left:950.30px;top:406.00px;font-size:11.3px;color:#000;letter-spacing:0.120px;">0.87</div>
<div class="t th" style="left:342.50px;top:421.00px;font-size:11.3px;color:#000;letter-spacing:0.170px;">RS_(2)19/32_10d@2</div>
<div class="t th" style="left:468.50px;top:421.00px;font-size:11.3px;color:#000;letter-spacing:0.120px;">RS</div>
<div class="t th" style="left:515.50px;top:421.00px;font-size:11.3px;color:#000;letter-spacing:0.120px;">0.594</div>
<div class="t th" style="left:567.00px;top:421.00px;font-size:11.3px;color:#000;letter-spacing:0.120px;">1.5</div>
<div class="t th" style="left:628.50px;top:421.00px;font-size:11.3px;color:#000;letter-spacing:0.120px;">No</div>
<div class="t th" style="left:706.50px;top:421.00px;font-size:11.3px;color:#000;letter-spacing:0.120px;">2</div>
<div class="t th" style="left:775.00px;top:421.00px;font-size:11.3px;color:#000;letter-spacing:0.120px;">10.000<span style="letter-spacing:1.25px">...</span></div>
<div class="t th" style="left:835.80px;top:421.00px;font-size:11.3px;color:#000;letter-spacing:0.120px;">n/a</div>
<div class="t th" style="left:908.20px;top:421.00px;font-size:11.3px;color:#000;letter-spacing:0.120px;">2</div>
<div class="t th" style="left:950.30px;top:421.00px;font-size:11.3px;color:#000;letter-spacing:0.120px;">1.74</div>
<div class="t th" style="left:342.50px;top:435.00px;font-size:11.3px;color:#fff;letter-spacing:0.170px;">RISAFloor_wallsheat<span style="letter-spacing:1.25px">...</span></div>
<div class="t th" style="left:468.50px;top:435.00px;font-size:11.3px;color:#fff;letter-spacing:0.120px;">RS</div>
<div class="t th" style="left:515.50px;top:435.00px;font-size:11.3px;color:#fff;letter-spacing:0.120px;">0.594</div>
<div class="t th" style="left:567.00px;top:435.00px;font-size:11.3px;color:#fff;letter-spacing:0.120px;">1.5</div>
<div class="t th" style="left:628.50px;top:435.00px;font-size:11.3px;color:#fff;letter-spacing:0.120px;">No</div>
<div class="t th" style="left:706.50px;top:435.00px;font-size:11.3px;color:#fff;letter-spacing:0.120px;">2</div>
<div class="t th" style="left:775.00px;top:435.00px;font-size:11.3px;color:#fff;letter-spacing:0.120px;">10.000<span style="letter-spacing:1.25px">...</span></div>
<div class="t th" style="left:835.80px;top:435.00px;font-size:11.3px;color:#fff;letter-spacing:0.120px;">n/a</div>
<div class="t th" style="left:908.20px;top:435.00px;font-size:11.3px;color:#fff;letter-spacing:0.120px;">2</div>
<div class="t th" style="left:950.30px;top:435.00px;font-size:11.3px;color:#fff;letter-spacing:0.120px;">1.74</div>
<div class="a" style="left:1031px;top:196.5px;width:17.5px;height:263.5px;background:#f0f0f0"></div>
<div class="a" style="left:1032px;top:404.5px;width:15px;height:37px;background:#cdcdcd"></div>
<svg class="a" style="left:1031px;top:196.5px" width="18" height="264"><path d="M4.8 11.4L8.9 7.2L13 11.4" stroke="#3c3c3c" stroke-width="2.05" fill="none"/><path d="M4.8 251.5L8.9 255.7L13 251.5" stroke="#3c3c3c" stroke-width="2.05" fill="none"/></svg>
<div class="a" style="left:339px;top:460px;width:709.5px;height:16.5px;background:#f0f0f0"></div>
<div class="a" style="left:357px;top:460.5px;width:589px;height:15px;background:#cdcdcd"></div>
<svg class="a" style="left:339px;top:460px" width="710" height="17"><path d="M11.5 4.3L7.3 8.4L11.5 12.5" stroke="#3c3c3c" stroke-width="2.05" fill="none"/><path d="M680.3 4.3L684.5 8.4L680.3 12.5" stroke="#3c3c3c" stroke-width="2.05" fill="none"/></svg>
<div class="t th" style="left:925.30px;top:489.00px;font-size:11.3px;color:#000;letter-spacing:-0.030px;">Current Selection Type</div>
<div class="t th" style="left:759.00px;top:508.00px;font-size:11.3px;color:#000;letter-spacing:-0.176px;">Select Entire Panel Group</div>
<div class="a sunk" style="left:890.3px;top:507px;width:13.2px;height:13.5px;background:#fff"></div>
<div class="a sunk" style="left:921.7px;top:503.7px;width:128.5px;height:21.3px;background:#c0c0c0"></div>
<div class="t th" style="left:955.40px;top:507.00px;font-size:11.3px;color:#000;letter-spacing:-0.050px;">INDIVIDUAL</div>
<div class="btn" style="left:333.5px;top:534px;width:171px;height:23.7px"></div>
<div class="t th" style="left:376.32px;top:541.00px;font-size:11.3px;color:#000;letter-spacing:-0.050px;">Save As Defaults</div>
<div class="btn" style="left:783.7px;top:534.8px;width:77.2px;height:23px"></div>
<div class="t th" style="left:814.67px;top:541.00px;font-size:11.3px;color:#000;">OK</div>
<div class="btn" style="left:876.3px;top:534.8px;width:77.6px;height:23px"></div>
<div class="t th" style="left:897.90px;top:541.00px;font-size:11.3px;color:#000;letter-spacing:-0.050px;">Cancel</div>
<div class="a" style="left:973px;top:534.8px;width:77.3px;height:23px;background:#3c3c3c"></div><div class="btn" style="left:974px;top:535.8px;width:75.3px;height:21px"></div>
<div class="t th" style="left:999.91px;top:541.00px;font-size:11.3px;color:#000;">Help</div>
<svg class="a" style="left:0;top:0" width="1315" height="574">
 <defs><filter id="sh" x="-30%" y="-30%" width="160%" height="170%"><feGaussianBlur in="SourceAlpha" stdDeviation="1.6"/><feOffset dy="1.5"/><feComponentTransfer><feFuncA type="linear" slope=".35"/></feComponentTransfer><feMerge><feMergeNode/><feMergeNode in="SourceGraphic"/></feMerge></filter></defs>
 <g fill="none" stroke="#f81010" stroke-width="2.15" filter="url(#sh)">
  <rect x="160.3" y="66.2" width="183.7" height="46.6" rx="6.5"/>
  <rect x="746.6" y="35.4" width="138" height="29" rx="6"/>
  <rect x="1179.8" y="136.2" width="113.2" height="19" rx="5"/>
  <rect x="335.7" y="431.7" width="694" height="18.8" rx="5.5" stroke-width="2.5"/>
  <rect x="331" y="527.8" width="183" height="33.4" rx="6"/>
  <rect x="753.6" y="486" width="300" height="41.8" rx="6.5"/>
 </g>
 <g fill="#fa0b0b" filter="url(#sh)">
  <path d="M336.5 114 L389.4 152 L391.4 146.1 L403.5 172.9 L375.5 164.4 L380.3 161.8 Z"/>
  <path d="M1182 153.6 L1114.4 122.6 L1117 116.9 L1087.4 118.3 L1108.7 138.7 L1110.4 133.1 Z"/>
 </g>
 <g filter="url(#sh)">
  <circle cx="318.2" cy="28.3" r="17.6" fill="#dc2a2c" stroke="#f51f1f" stroke-width="1.8"/>
  <circle cx="443" cy="173.2" r="17.6" fill="#dc2a2c" stroke="#f51f1f" stroke-width="1.8"/>
  <circle cx="1119" cy="163" r="17.6" fill="#dc2a2c" stroke="#f51f1f" stroke-width="1.8"/>
 </g>
 <g style="font-family:'Liberation Sans',sans-serif;font-size:21.3px" fill="#fff" stroke="#fff" stroke-width="0.25" text-anchor="middle">
  <text x="317.5" y="36">2</text><text x="443" y="181">3</text><text x="1119.4" y="170.5" stroke-width="1.1">1</text>
 </g>
 <rect x="1111" y="167" width="6.85" height="6" fill="#dc2a2c"/><rect x="1121.35" y="167" width="6" height="6" fill="#dc2a2c"/>
</svg>
</body></html>
